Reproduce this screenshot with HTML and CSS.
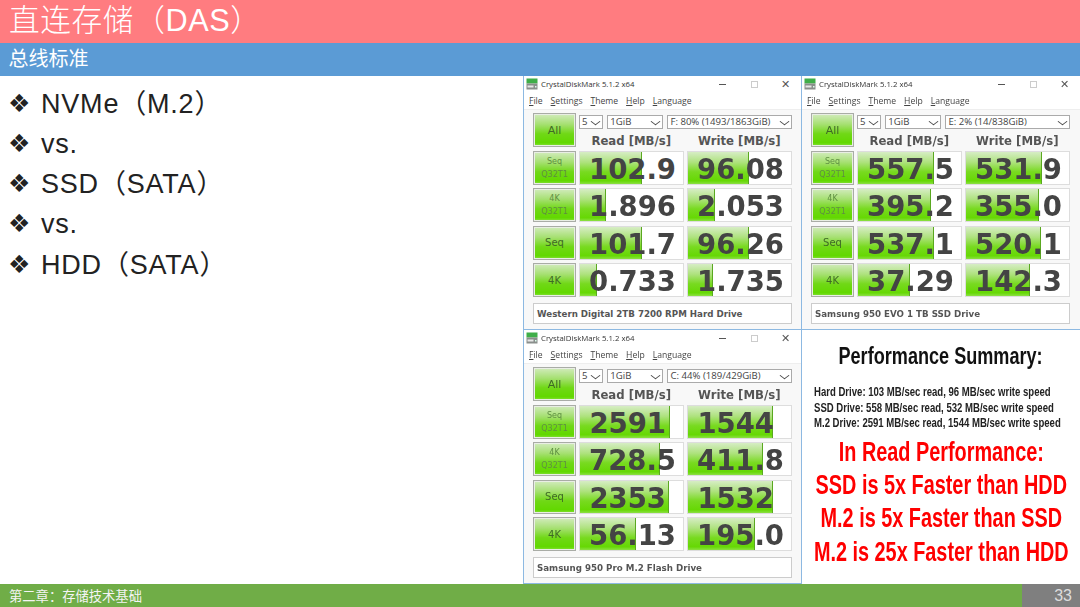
FILE: index.html
```html
<!DOCTYPE html>
<html lang="zh">
<head>
<meta charset="utf-8">
<title>直连存储</title>
<link rel="stylesheet" href="styles.css">
</head>
<body>
<svg class="defs" width="0" height="0" aria-hidden="true">
  <symbol id="cdm" viewBox="0 0 12 12">
    <rect x="0.5" y="0.5" width="11" height="5" fill="#3fae49"/>
    <rect x="0.5" y="5.5" width="11" height="6" fill="#8a8f8c"/>
    <rect x="1.5" y="7.5" width="6" height="2" fill="#e8e8e8"/>
    <rect x="9" y="8" width="1.5" height="1.5" fill="#dfe"/>
  </symbol>
</svg>
<header class="title">直连存储&#xFF08;DAS&#xFF09;</header>
<div class="subtitle">总线标准</div>
<main class="main">
  <ul class="points">
    <li><span class="mark">❖</span>NVMe&#xFF08;M.2&#xFF09;</li>
    <li><span class="mark">❖</span>vs.</li>
    <li><span class="mark">❖</span>SSD&#xFF08;SATA&#xFF09;</li>
    <li><span class="mark">❖</span>vs.</li>
    <li><span class="mark">❖</span>HDD&#xFF08;SATA&#xFF09;</li>
  </ul>
  <section class="shots">
    <article class="win">
      <div class="bar"><svg class="ico"><use href="#cdm"/></svg><span class="name">CrystalDiskMark 5.1.2 x64</span><span class="ctl min"></span><span class="ctl max"></span><span class="ctl close">✕</span></div>
      <div class="menu"><span><u>F</u>ile</span><span><u>S</u>ettings</span><span><u>T</u>heme</span><span><u>H</u>elp</span><span><u>L</u>anguage</span></div>
      <div class="body">
        <div class="top">
          <div class="btn all">All</div>
          <div class="ctrls">
            <div class="selects"><div class="sel s1">5</div><div class="sel s2">1GiB</div><div class="sel s3">F: 80% (1493/1863GiB)</div></div>
            <div class="heads"><span>Read [MB/s]</span><span>Write [MB/s]</span></div>
          </div>
        </div>
        <div class="rows">
          <div class="btn"><span>Seq<br>Q32T1</span></div>
          <div class="cell"><i style="width:60%"></i><b>102.9</b></div>
          <div class="cell"><i style="width:59%"></i><b>96.08</b></div>
          <div class="btn"><span>4K<br>Q32T1</span></div>
          <div class="cell"><i style="width:26%"></i><b>1.896</b></div>
          <div class="cell"><i style="width:26.6%"></i><b>2.053</b></div>
          <div class="btn dark">Seq</div>
          <div class="cell"><i style="width:60%"></i><b>101.7</b></div>
          <div class="cell"><i style="width:59.5%"></i><b>96.26</b></div>
          <div class="btn dark">4K</div>
          <div class="cell"><i style="width:17%"></i><b>0.733</b></div>
          <div class="cell"><i style="width:24.7%"></i><b>1.735</b></div>
        </div>
        <div class="drive">Western Digital 2TB 7200 RPM Hard Drive</div>
      </div>
    </article>
    <article class="win">
      <div class="bar"><svg class="ico"><use href="#cdm"/></svg><span class="name">CrystalDiskMark 5.1.2 x64</span><span class="ctl min"></span><span class="ctl max"></span><span class="ctl close">✕</span></div>
      <div class="menu"><span><u>F</u>ile</span><span><u>S</u>ettings</span><span><u>T</u>heme</span><span><u>H</u>elp</span><span><u>L</u>anguage</span></div>
      <div class="body">
        <div class="top">
          <div class="btn all">All</div>
          <div class="ctrls">
            <div class="selects"><div class="sel s1">5</div><div class="sel s2">1GiB</div><div class="sel s3">E: 2% (14/838GiB)</div></div>
            <div class="heads"><span>Read [MB/s]</span><span>Write [MB/s]</span></div>
          </div>
        </div>
        <div class="rows">
          <div class="btn"><span>Seq<br>Q32T1</span></div>
          <div class="cell"><i style="width:74%"></i><b>557.5</b></div>
          <div class="cell"><i style="width:73.6%"></i><b>531.9</b></div>
          <div class="btn"><span>4K<br>Q32T1</span></div>
          <div class="cell"><i style="width:71%"></i><b>395.2</b></div>
          <div class="cell"><i style="width:70.8%"></i><b>355.0</b></div>
          <div class="btn dark">Seq</div>
          <div class="cell"><i style="width:73.7%"></i><b>537.1</b></div>
          <div class="cell"><i style="width:73.3%"></i><b>520.1</b></div>
          <div class="btn dark">4K</div>
          <div class="cell"><i style="width:51%"></i><b>37.29</b></div>
          <div class="cell"><i style="width:62.5%"></i><b>142.3</b></div>
        </div>
        <div class="drive">Samsung 950 EVO 1 TB SSD Drive</div>
      </div>
    </article>
    <article class="win">
      <div class="bar"><svg class="ico"><use href="#cdm"/></svg><span class="name">CrystalDiskMark 5.1.2 x64</span><span class="ctl min"></span><span class="ctl max"></span><span class="ctl close">✕</span></div>
      <div class="menu"><span><u>F</u>ile</span><span><u>S</u>ettings</span><span><u>T</u>heme</span><span><u>H</u>elp</span><span><u>L</u>anguage</span></div>
      <div class="body">
        <div class="top">
          <div class="btn all">All</div>
          <div class="ctrls">
            <div class="selects"><div class="sel s1">5</div><div class="sel s2">1GiB</div><div class="sel s3">C: 44% (189/429GiB)</div></div>
            <div class="heads"><span>Read [MB/s]</span><span>Write [MB/s]</span></div>
          </div>
        </div>
        <div class="rows">
          <div class="btn"><span>Seq<br>Q32T1</span></div>
          <div class="cell"><i style="width:87.4%"></i><b class="int">2591</b></div>
          <div class="cell"><i style="width:83%"></i><b class="int">1544</b></div>
          <div class="btn"><span>4K<br>Q32T1</span></div>
          <div class="cell"><i style="width:77.6%"></i><b>728.5</b></div>
          <div class="cell"><i style="width:72.8%"></i><b>411.8</b></div>
          <div class="btn dark">Seq</div>
          <div class="cell"><i style="width:86.4%"></i><b class="int">2353</b></div>
          <div class="cell"><i style="width:83%"></i><b class="int">1532</b></div>
          <div class="btn dark">4K</div>
          <div class="cell"><i style="width:54.6%"></i><b>56.13</b></div>
          <div class="cell"><i style="width:65.2%"></i><b>195.0</b></div>
        </div>
        <div class="drive">Samsung 950 Pro M.2 Flash Drive</div>
      </div>
    </article>
    <aside class="summary">
      <h2>Performance Summary:</h2>
      <p class="facts">Hard Drive: 103 MB/sec read, 96 MB/sec write speed<br>SSD Drive: 558 MB/sec read, 532 MB/sec write speed<br>M.2 Drive: 2591 MB/sec read, 1544 MB/sec write speed</p>
      <p class="claims">In Read Performance:<br>SSD is 5x Faster than HDD<br>M.2 is 5x Faster than SSD<br>M.2 is 25x Faster than HDD</p>
    </aside>
  </section>
</main>
<footer class="foot"><span class="chapter">第二章&#xFF1A;存储技术基础</span><span class="page">33</span></footer>
</body>
</html>
```
FILE: styles.css
```css
* { box-sizing: border-box; }
html, body { margin: 0; padding: 0; }
body {
  width: 1080px;
  height: 607px;
  overflow: hidden;
  background: #fff;
  font-family: "Liberation Sans", "Noto Sans CJK SC", sans-serif;
  display: flex;
  flex-direction: column;
}
.defs { position: absolute; }
.title {
  height: 43px;
  background: #ff7c80;
  color: #fff;
  font-size: 30.7px;
  font-weight: 300;
  line-height: 41px;
  padding-left: 9px;
  letter-spacing: 0.6px;
  white-space: nowrap;
}
.subtitle {
  height: 33px;
  background: #5b9bd5;
  color: #fff;
  font-size: 20px;
  line-height: 33px;
  padding-left: 8.5px;
}
.main {
  flex: 1;
  display: flex;
  justify-content: space-between;
  min-height: 0;
}
.points {
  list-style: none;
  margin: 0;
  padding: 7.6px 0 0 8px;
  font-size: 27px;
  line-height: 40.3px;
  letter-spacing: 0.8px;
  color: #222;
}
.points li { display: flex; align-items: center; white-space: nowrap; height: 40.3px; }
.mark {
  width: 33px;
  font-family: "DejaVu Sans", sans-serif;
  font-size: 25px;
  letter-spacing: 0;
}
.shots {
  width: 557px;
  display: grid;
  grid-template-columns: 278px 279px;
  grid-template-rows: 254px 254px;
  filter: blur(0.35px);
}
.win {
  border-left: 1px solid #8db9e2;
  border-bottom: 1px solid #8db9e2;
  background: #f8f8f8;
  color: #444;
  min-width: 0;
  font-family: "Open Sans", sans-serif;
}
.bar {
  height: 16px;
  background: #fff;
  display: flex;
  align-items: center;
  padding-left: 2px;
  font-size: 7.8px;
  color: #333;
}
.ico { width: 12px; height: 12px; margin-right: 3px; flex: none; }
.name { flex: 1; white-space: nowrap; }
.ctl { display: block; flex: none; }
.min { width: 7px; height: 1px; background: #555; margin-right: 25px; }
.max { width: 7px; height: 7px; border: 1px solid #ccc; margin-right: 23px; }
.close { width: 20px; font-size: 11px; line-height: 12px; color: #555; }
.menu {
  height: 18px;
  background: #fff;
  display: flex;
  gap: 8px;
  align-items: center;
  padding-left: 5px;
  font-size: 8.6px;
  color: #444;
  border-bottom: 1px solid #eee;
}
.body { padding: 3px 0 0 9px; width: 268px; }
.top { display: flex; gap: 2.5px; height: 37.5px; }
.btn {
  width: 43px;
  height: 34px;
  flex: none;
  border: 1px solid #a9aca6;
  box-shadow: inset 0 0 0 1px #e9eee4;
  background: linear-gradient(#d2ebbd 0%, #a6e072 32%, #70d816 62%, #62d800 90%, #86e03c 100%);
  display: flex;
  align-items: center;
  justify-content: center;
  text-align: center;
  color: #3f6a25;
  font-size: 10px;
  line-height: 13px;
  font-family: "DejaVu Sans", sans-serif;
}
.btn span { color: #5f8f42; font-size: 8px; }
.btn.all { font-size: 11px; }
.ctrls { flex: 1; min-width: 0; padding-top: 2px; }
.selects { display: flex; gap: 3.5px; height: 14px; }
.sel {
  position: relative;
  border: 1px solid #aaa;
  background: #fff;
  font-size: 9.6px;
  line-height: 12px;
  padding-left: 2.5px;
  color: #444;
  white-space: nowrap;
}
.sel::after {
  content: "";
  position: absolute;
  right: 3px;
  top: 1.5px;
  width: 6px;
  height: 6px;
  border-right: 1.2px solid #444;
  border-bottom: 1.2px solid #444;
  transform: scaleY(0.75) rotate(45deg);
}
.s1 { width: 25px; }
.s2 { width: 57px; }
.s3 { width: 126px; }
.heads {
  display: grid;
  grid-template-columns: 105.5px 105.5px;
  gap: 2.5px;
  text-align: center;
  font-family: "DejaVu Sans", sans-serif;
  font-weight: 700;
  font-size: 11.7px;
  line-height: 24px;
  color: #555;
  white-space: nowrap;
}
.rows {
  display: grid;
  grid-template-columns: 43px 105.5px 105.5px;
  gap: 3.5px 2.5px;
  grid-auto-rows: 34px;
}
.cell {
  position: relative;
  background: #fff;
  border: 1px solid #ddd;
  text-align: right;
  overflow: hidden;
}
.cell i {
  position: absolute;
  left: 0;
  top: 0;
  bottom: 0;
  border-right: 1px solid #5aa820;
  background: linear-gradient(#d6edc4 0%, #aee27e 32%, #78da20 62%, #66d804 90%, #8ce044 100%);
}
.cell b {
  position: relative;
  font-family: "DejaVu Sans", sans-serif;
  font-size: 27.5px;
  line-height: 34px;
  padding-right: 7px;
  color: #444;
  display: block;
}
.cell b.int { padding-right: 17px; }
.drive {
  width: 259px;
  height: 21px;
  margin-top: 6px;
  background: #fff;
  border: 1px solid #ccc;
  padding-left: 3px;
  font-family: "DejaVu Sans", sans-serif;
  font-weight: 700;
  font-size: 8.7px;
  line-height: 20px;
  color: #555;
  white-space: nowrap;
}
.summary {
  border-left: 1px solid #8db9e2;
  background: #fff;
  display: flex;
  flex-direction: column;
  align-items: center;
  text-align: center;
  font-weight: 700;
  white-space: nowrap;
  min-width: 0;
}
.summary h2 {
  margin: 12px 0 0;
  font-size: 23.5px;
  line-height: 28px;
  color: #111;
  transform: scaleX(0.77);
}
.facts {
  align-self: flex-start;
  margin: 15px 0 0 12px;
  text-align: left;
  font-size: 12.2px;
  line-height: 15.5px;
  color: #222;
  transform: scaleX(0.785);
  transform-origin: left center;
}
.claims {
  margin: 4px 0 0;
  font-size: 27px;
  line-height: 33.4px;
  color: #f00;
  transform: scaleX(0.735);
}
.foot {
  height: 23px;
  background: #70ad47;
  display: flex;
  justify-content: space-between;
  align-items: center;
}
.chapter { padding-left: 9px; color: #f4f4f4; font-size: 13.3px; }
.page {
  width: 58px;
  height: 100%;
  background: #7f7f7f;
  color: #ddd;
  font-size: 16px;
  line-height: 23px;
  text-align: right;
  padding-right: 8px;
}
```
